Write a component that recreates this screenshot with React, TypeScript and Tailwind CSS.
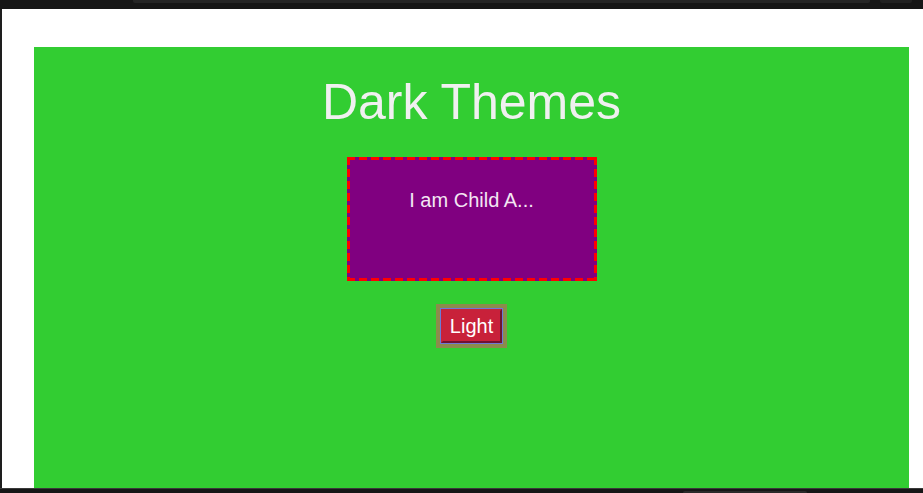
import React from "react";

export default function App() {
  return (
    <div
      className="w-[923px] h-[493px] flex flex-col bg-[#161616] overflow-hidden"
      style={{ fontFamily: '"Liberation Sans", Arial, sans-serif' }}
    >
      {/* top chrome bar */}
      <div className="h-[9px] flex shrink-0">
        <div className="w-[133px]" />
        <div className="w-[737px] h-[3px] bg-[#252525] rounded-b-[2px]" />
        <div className="w-[10px]" />
        <div className="w-[32px] h-[3px] bg-[#222222] rounded-b-[2px]" />
      </div>
      {/* main */}
      <div className="flex h-[479px] shrink-0">
        <div className="w-[2px] bg-[#1e1e1e]" />
        <div className="flex-1 bg-white pt-[38px] pl-[32px] pr-[14px] flex">
          <div className="flex-1 bg-[#32cd32] pt-[27px] flex flex-col items-center">
            <h1 className="text-[50px] leading-[57px] text-[#f0f0f0] font-normal">
              Dark Themes
            </h1>
            <div className="relative mt-[26px] w-[250px] h-[124px] bg-[#800080] pt-[32px] text-center">
              <svg className="absolute inset-0" width="250" height="124" viewBox="0 0 250 124">
                <g stroke="#ff0000" strokeWidth="3" strokeDasharray="8 4" fill="none">
                  <line x1="0" y1="1.5" x2="250" y2="1.5" />
                  <line x1="0" y1="122.5" x2="250" y2="122.5" />
                  <line x1="1.5" y1="0" x2="1.5" y2="124" />
                  <line x1="248.5" y1="0" x2="248.5" y2="124" />
                </g>
              </svg>
              <p className="relative text-[20px] leading-[23px] text-[#f3e6f3]">I am Child A...</p>
            </div>
            <div className="mt-[23px] p-[4px] bg-[#8c8b4c]">
              <div className="border border-[#6c7ad6]">
                <button className="w-[61px] h-[34px] flex items-center justify-center bg-[#c8213a] border-2 border-t-[#c8213a] border-l-[#c8213a] border-r-[#6e1432] border-b-[#6e1432] text-white text-[20px] leading-[23px]">
                  Light
                </button>
              </div>
            </div>
          </div>
        </div>
      </div>
      {/* bottom chrome */}
      <div className="h-[1px] bg-[#3a3a3a] shrink-0" />
      <div className="flex-1 flex items-end">
        <div className="w-[683px]" />
        <div className="w-[124px] h-[2px] bg-[#2a2a2a] rounded-t-[2px]" />
      </div>
    </div>
  );
}
